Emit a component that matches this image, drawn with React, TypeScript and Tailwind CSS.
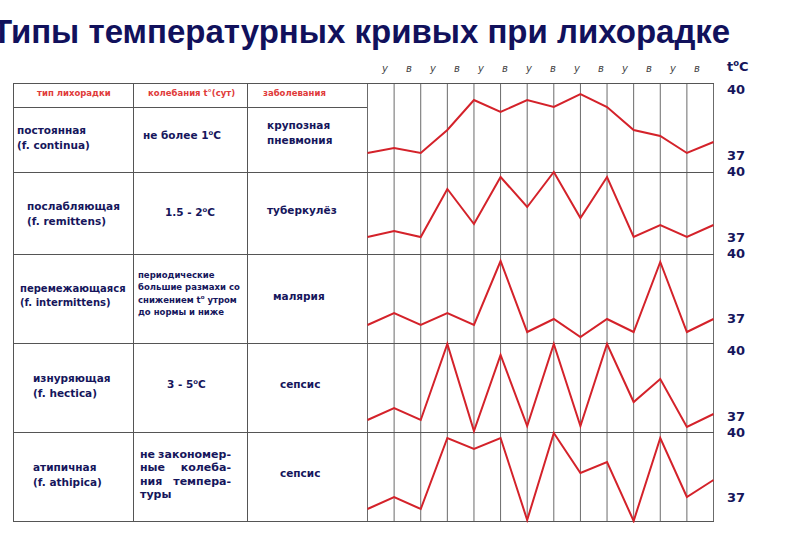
import React from 'react';

const rows = [
  { h: 'h-[65px]', ys: [153, 148, 153, 130, 100, 112, 100, 107, 94, 107, 130, 136, 153, 142] },
  { h: 'h-[82px]', ys: [237, 231, 237, 189, 224, 177, 207, 172, 218, 177, 237, 225, 237, 225] },
  { h: 'h-[89px]', ys: [325, 313, 325, 313, 325, 261, 332, 319, 337, 319, 332, 262, 332, 319] },
  { h: 'h-[89px]', ys: [420, 408, 420, 344, 431, 355, 426, 344, 426, 344, 402, 379, 427, 414] },
  { h: 'h-[89px]', ys: [509, 497, 509, 438, 449, 438, 520, 433, 473, 462, 521, 438, 497, 480] },
];

const days = ['у', 'в', 'у', 'в', 'у', 'в', 'у', 'в', 'у', 'в', 'у', 'в', 'у', 'в'];
const step = 346 / 13;

function Deg() {
  return <sup className="-top-[0.55em] text-[0.65em]">o</sup>;
}

function Chart() {
  const top = 83;
  const hLines = [83, 172, 254, 343, 432, 521];
  return (
    <svg width="347" height="440" viewBox="0 0 347 440" className="block shrink-0">
      {Array.from({ length: 14 }).map((_, i) => (
        <line key={i} x1={0.5 + i * step} y1={0} x2={0.5 + i * step} y2={439} stroke="#6b6b6b" strokeWidth="1" />
      ))}
      {hLines.map((y) => (
        <line key={y} x1={0} y1={y - top + 0.5} x2={347} y2={y - top + 0.5} stroke="#555" strokeWidth="1" />
      ))}
      {rows.map((r, k) => (
        <polyline
          key={k}
          points={r.ys.map((y, i) => `${0.5 + i * step},${y - top}`).join(' ')}
          fill="none"
          stroke="#d4222a"
          strokeWidth="2"
          strokeLinejoin="miter"
        />
      ))}
    </svg>
  );
}

function Cell({ w, className, children, last }: { w: string; className?: string; children?: React.ReactNode; last?: boolean }) {
  return (
    <div className={`flex h-full ${w} ${last ? '' : 'border-r border-[#555]'} ${className ?? ''}`}>{children}</div>
  );
}

export default function App() {
  const body = 'font-["DejaVu_Sans",sans-serif] font-bold text-[#16165c]';
  return (
    <div className="h-[533px] w-[800px] overflow-hidden bg-white">
      <div className='-ml-[8px] h-[48px] pt-[15px] font-["Liberation_Sans",Arial,sans-serif] text-[33px] font-bold leading-[33px] whitespace-nowrap text-[#11115c]'>
        Типы температурных кривых при лихорадке
      </div>

      <div className="flex h-[35px] pt-[14px] pl-[373px]">
        {days.map((d, i) => (
          <span key={i} className='w-[24px] text-center font-["DejaVu_Sans",sans-serif] text-[10px] leading-[14px] italic text-[#444]'>
            {d}
          </span>
        ))}
        <span className={`ml-[18px] -mt-[2px] text-[13px] leading-[14px] ${body}`}>
          t<Deg />C
        </span>
      </div>

      <div className="flex items-start">
        <div className={`ml-[13px] flex flex-col border-t border-l border-[#555] ${body}`}>
          <div className="flex h-[24px] border-b border-[#555] text-[8.5px] leading-[12px] text-[#e03a3a]">
            <Cell w="w-[120px]" className="pt-[3px] pl-[23px]">тип лихорадки</Cell>
            <Cell w="w-[114px]" className="pt-[3px] pl-[14px]">колебания t°(сут)</Cell>
            <Cell w="w-[119px]" className="pt-[3px] pl-[15px]" last>заболевания</Cell>
          </div>

          <div className={`flex ${rows[0].h} border-b border-[#555] text-[10.5px] leading-[15px]`}>
            <Cell w="w-[120px]" className="items-center pb-[5px] pl-[3px]">
              <div>постоянная<br />(f. continua)</div>
            </Cell>
            <Cell w="w-[114px]" className="items-center pb-[9px] pl-[9px]">
              <div>не более 1<Deg />C</div>
            </Cell>
            <Cell w="w-[119px]" className="items-center pb-[15px] pl-[19px]" last>
              <div>крупозная<br />пневмония</div>
            </Cell>
          </div>

          <div className={`flex ${rows[1].h} border-b border-[#555] text-[10.5px] leading-[15px]`}>
            <Cell w="w-[120px]" className="items-center pl-[13px]">
              <div>послабляющая<br />(f. remittens)</div>
            </Cell>
            <Cell w="w-[114px]" className="items-center pb-[2px] pl-[31px]">
              <div>1.5 - 2<Deg />C</div>
            </Cell>
            <Cell w="w-[119px]" className="items-center pb-[6px] pl-[19px]" last>
              <div>туберкулёз</div>
            </Cell>
          </div>

          <div className={`flex ${rows[2].h} border-b border-[#555] text-[10.5px] leading-[14px]`}>
            <Cell w="w-[120px]" className="items-center pb-[7px] pl-[6px] text-[10px]">
              <div>перемежающаяся<br />(f. intermittens)</div>
            </Cell>
            <Cell w="w-[114px]" className="items-center pb-[11px] pl-[4px] text-[8.5px] leading-[12.5px]">
              <div>
                периодические<br />большие размахи со<br />снижением t<Deg /> утром<br />до нормы и ниже
              </div>
            </Cell>
            <Cell w="w-[119px]" className="items-center pb-[7px] pl-[25px]" last>
              <div>малярия</div>
            </Cell>
          </div>

          <div className={`flex ${rows[3].h} border-b border-[#555] text-[10.5px] leading-[15px]`}>
            <Cell w="w-[120px]" className="items-center pb-[5px] pl-[19px]">
              <div>изнуряющая<br />(f. hectica)</div>
            </Cell>
            <Cell w="w-[114px]" className="items-center pb-[7px] pl-[33px]">
              <div>3 - 5<Deg />C</div>
            </Cell>
            <Cell w="w-[119px]" className="items-center pb-[7px] pl-[32px]" last>
              <div>сепсис</div>
            </Cell>
          </div>

          <div className={`flex ${rows[4].h} border-b border-[#555] text-[10.5px] leading-[15px]`}>
            <Cell w="w-[120px]" className="items-center pb-[5px] pl-[19px]">
              <div>атипичная<br />(f. athipica)</div>
            </Cell>
            <Cell w="w-[114px]" className="items-center pb-[5px] pl-[6px] text-[11px] leading-[13.5px]">
              <div className="w-[91px]">
                <div className="flex justify-between"><span>не</span><span>закономер-</span></div>
                <div className="flex justify-between"><span>ные</span><span>колеба-</span></div>
                <div className="flex justify-between"><span>ния</span><span>темпера-</span></div>
                <div>туры</div>
              </div>
            </Cell>
            <Cell w="w-[119px]" className="items-center pb-[7px] pl-[32px]" last>
              <div>сепсис</div>
            </Cell>
          </div>
        </div>

        <Chart />

        <div className={`ml-[13px] flex flex-col text-[13px] leading-[14px] ${body}`}>
          <span>40</span>
          <span className="mt-[52px]">37</span>
          <span className="mt-[2px]">40</span>
          <span className="mt-[52px]">37</span>
          <span className="mt-[2px]">40</span>
          <span className="mt-[51px]">37</span>
          <span className="mt-[18px]">40</span>
          <span className="mt-[52px]">37</span>
          <span className="mt-[2px]">40</span>
          <span className="mt-[51px]">37</span>
        </div>
      </div>
    </div>
  );
}
